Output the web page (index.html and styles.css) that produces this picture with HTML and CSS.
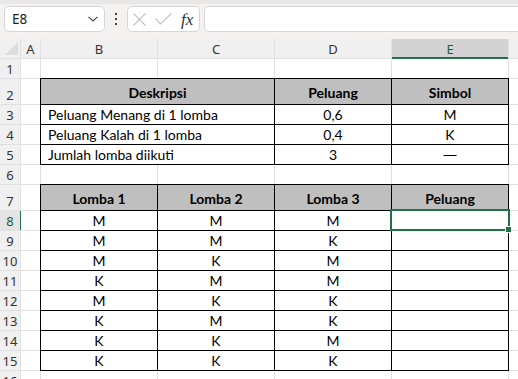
FILE: index.html
```html
<!DOCTYPE html>
<html>
<head>
<meta charset="utf-8">
<link rel="stylesheet" href="styles.css">
</head>
<body>
<div class="app">
  <div class="toolbar">
    <div class="namebox">
      <span class="ref">E8</span>
      <svg class="chev" width="10" height="6" viewBox="0 0 10 6"><path d="M0.5 0.8 L5 5 L9.5 0.8" fill="none" stroke="#444" stroke-width="1.1"/></svg>
    </div>
    <div class="dots"><i></i><i></i><i></i></div>
    <div class="fbtns">
      <svg class="xic" width="13" height="13" viewBox="0 0 13 13"><path d="M0.5 0.5 L12.5 12.5 M12.5 0.5 L0.5 12.5" stroke="#c4c4c4" stroke-width="1.2" fill="none"/></svg>
      <svg class="ckic" width="17" height="12" viewBox="0 0 17 12"><path d="M0.5 5.5 L5.5 11 L16.5 0.5" stroke="#c4c4c4" stroke-width="1.2" fill="none"/></svg>
      <span class="fx">fx</span>
    </div>
    <div class="finput"></div>
  </div>
  <div class="sheet">
    <!-- column headers -->
    <div class="corner"><svg width="13" height="13" viewBox="0 0 13 13"><path d="M13 0 L13 13 L0 13 Z" fill="#dcdcdc"/></svg></div>
    <div class="ch">A</div>
    <div class="ch">B</div>
    <div class="ch">C</div>
    <div class="ch">D</div>
    <div class="ch sel">E</div>
    <div class="ch"></div>

    <!-- row 1 -->
    <div class="rh">1</div>
    <div class="c"></div><div class="c"></div><div class="c"></div><div class="c"></div><div class="c"></div><div class="c"></div>

    <!-- row 2 -->
    <div class="rh">2</div>
    <div class="c"></div>
    <div class="c t th span2">Deskripsi</div>
    <div class="c t th">Peluang</div>
    <div class="c t th">Simbol</div>
    <div class="c"></div>

    <!-- row 3 -->
    <div class="rh">3</div>
    <div class="c"></div>
    <div class="c t l span2">Peluang Menang di 1 lomba</div>
    <div class="c t">0,6</div>
    <div class="c t">M</div>
    <div class="c"></div>

    <!-- row 4 -->
    <div class="rh">4</div>
    <div class="c"></div>
    <div class="c t l span2">Peluang Kalah di 1 lomba</div>
    <div class="c t">0,4</div>
    <div class="c t">K</div>
    <div class="c"></div>

    <!-- row 5 -->
    <div class="rh">5</div>
    <div class="c"></div>
    <div class="c t l span2">Jumlah lomba diikuti</div>
    <div class="c t">3</div>
    <div class="c t"><span class="dash">—</span></div>
    <div class="c"></div>

    <!-- row 6 -->
    <div class="rh">6</div>
    <div class="c"></div><div class="c"></div><div class="c"></div><div class="c"></div><div class="c"></div><div class="c"></div>

    <!-- row 7 -->
    <div class="rh">7</div>
    <div class="c"></div>
    <div class="c t th">Lomba 1</div>
    <div class="c t th">Lomba 2</div>
    <div class="c t th">Lomba 3</div>
    <div class="c t th">Peluang</div>
    <div class="c"></div>

    <!-- row 8 -->
    <div class="rh rsel">8</div>
    <div class="c"></div>
    <div class="c t">M</div><div class="c t">M</div><div class="c t">M</div>
    <div class="c t active"></div>
    <div class="c"></div>

    <!-- row 9 -->
    <div class="rh">9</div>
    <div class="c"></div>
    <div class="c t">M</div><div class="c t">M</div><div class="c t">K</div><div class="c t"></div>
    <div class="c"></div>

    <!-- row 10 -->
    <div class="rh">10</div>
    <div class="c"></div>
    <div class="c t">M</div><div class="c t">K</div><div class="c t">M</div><div class="c t"></div>
    <div class="c"></div>

    <!-- row 11 -->
    <div class="rh">11</div>
    <div class="c"></div>
    <div class="c t">K</div><div class="c t">M</div><div class="c t">M</div><div class="c t"></div>
    <div class="c"></div>

    <!-- row 12 -->
    <div class="rh">12</div>
    <div class="c"></div>
    <div class="c t">M</div><div class="c t">K</div><div class="c t">K</div><div class="c t"></div>
    <div class="c"></div>

    <!-- row 13 -->
    <div class="rh">13</div>
    <div class="c"></div>
    <div class="c t">K</div><div class="c t">M</div><div class="c t">K</div><div class="c t"></div>
    <div class="c"></div>

    <!-- row 14 -->
    <div class="rh">14</div>
    <div class="c"></div>
    <div class="c t">K</div><div class="c t">K</div><div class="c t">M</div><div class="c t"></div>
    <div class="c"></div>

    <!-- row 15 -->
    <div class="rh">15</div>
    <div class="c"></div>
    <div class="c t">K</div><div class="c t">K</div><div class="c t">K</div><div class="c t"></div>
    <div class="c"></div>

    <!-- row 16 -->
    <div class="rh last">16</div>
    <div class="c"></div><div class="c"></div><div class="c"></div><div class="c"></div><div class="c"></div><div class="c"></div>
  </div>
</div>
</body>
</html>
```
FILE: styles.css
```css
html, body {
  margin: 0;
  padding: 0;
  background: #ffffff;
  overflow: hidden;
}
.app {
  width: 518px;
  height: 379px;
  overflow: hidden;
  display: flex;
  flex-direction: column;
  font-family: "Noto Sans", "Open Sans", sans-serif;
}
.toolbar {
  flex: 0 0 39px;
  height: 39px;
  box-sizing: border-box;
  background: #f3f2f1;
  border-top: 4px solid #e9e7e5;
  padding: 2px 0 0 4px;
  display: flex;
  align-items: flex-start;
}
.namebox {
  width: 101px;
  height: 26px;
  box-sizing: border-box;
  background: #fff;
  border: 1px solid #d6d6d6;
  border-radius: 5px;
  display: flex;
  align-items: center;
  padding: 0 6px 0 7px;
  justify-content: space-between;
}
.ref {
  font-size: 13.5px;
  color: #222;
}
.dots {
  width: 22px;
  height: 26px;
  display: flex;
  flex-direction: column;
  align-items: center;
  justify-content: center;
  gap: 3px;
}
.dots i {
  display: block;
  width: 2px;
  height: 2px;
  background: #444;
}
.fbtns {
  width: 73px;
  height: 26px;
  box-sizing: border-box;
  background: #fff;
  border: 1px solid #d6d6d6;
  border-radius: 5px;
  display: flex;
  align-items: center;
  padding-left: 5px;
}
.xic { margin-right: 9px; }
.ckic { margin-right: 9px; }
.fx {
  font-family: "Liberation Serif", "DejaVu Serif", serif;
  font-style: italic;
  font-size: 17px;
  color: #333;
  line-height: 1;
}
.finput {
  margin-left: 4px;
  flex: 1;
  height: 26px;
  box-sizing: border-box;
  background: #fff;
  border: 1px solid #d6d6d6;
  border-right: none;
  border-radius: 5px 0 0 5px;
}
.sheet {
  flex: 0 0 340px;
  height: 340px;
  overflow: hidden;
  display: grid;
  grid-template-columns: 20px 19px 116px 116px 116px 116px 1fr;
  grid-template-rows: 19px 19px 25px 19px 19px 19px 19px 25px repeat(8, 19px) 19px;
  gap: 1px;
  background: #e0e0e0;
}
.corner {
  background: #f0f0f0;
  display: flex;
  align-items: flex-end;
  justify-content: flex-end;
  padding: 0 2px 3px 0;
}
.ch {
  background: #f0f0f0;
  color: #333;
  font-size: 13px;
  display: flex;
  align-items: center;
  justify-content: center;
  position: relative;
}
.ch.sel {
  background: #d3d3d3;
  color: #1e5f3a;
}
.ch.sel::after {
  content: "";
  position: absolute;
  left: 0;
  right: 0;
  bottom: -1px;
  height: 2px;
  background: #217346;
}
.rh {
  background: #f0f0f0;
  color: #333;
  font-size: 13px;
  display: flex;
  align-items: flex-end;
  justify-content: center;
  line-height: 18px;
  position: relative;
}
.rh.last {
  align-items: flex-start;
  line-height: 14px;
  padding-top: 3px;
}
.rh.rsel {
  background: #e4e4e4;
  color: #1e5f3a;
}
.rh.rsel::after {
  content: "";
  position: absolute;
  top: 0;
  bottom: 0;
  right: -2px;
  width: 2px;
  background: #217346;
}
.c {
  background: #fff;
  color: #000;
  font-family: "Lato", "Open Sans", sans-serif;
  font-size: 14px;
  line-height: 18px;
  display: flex;
  align-items: flex-end;
  justify-content: center;
  white-space: nowrap;
  position: relative;
}
.dash {
  font-family: "Liberation Sans", sans-serif;
  font-size: 13px;
}
.span2 {
  grid-column: span 2;
}
.t {
  box-shadow: 0 0 0 1px #000;
}
.th {
  background: #bfbfbf;
  font-weight: bold;
  padding-bottom: 2px;
}
.l {
  justify-content: flex-start;
  padding-left: 7px;
}
.active::after {
  content: "";
  position: absolute;
  left: -2px;
  top: -2px;
  right: -2px;
  bottom: -1px;
  border: 2px solid #217346;
  z-index: 2;
}
.active::before {
  content: "";
  position: absolute;
  right: -4px;
  bottom: -3px;
  width: 5px;
  height: 5px;
  background: #217346;
  border: 1px solid #fff;
  z-index: 3;
}
```
